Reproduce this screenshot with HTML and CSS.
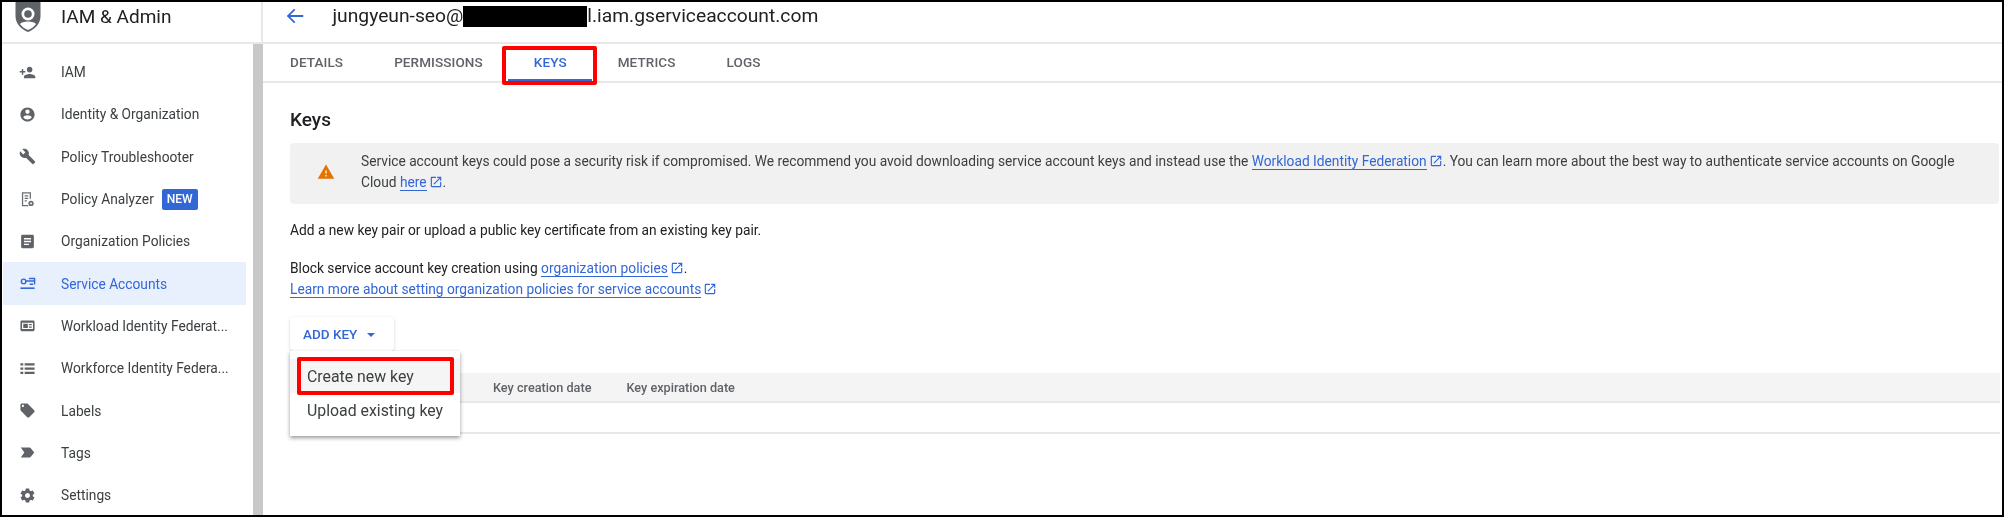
FILE: index.html
```html
<!DOCTYPE html>
<html lang="en">
<head>
<meta charset="utf-8">
<title>IAM &amp; Admin - Keys</title>
<link rel="stylesheet" href="styles.css">
</head>
<body>
<div class="frame">
  <header class="topbar">
    <div class="brand">
      <svg class="logo" viewBox="0 0 26 32"><path fill="#5f6368" d="M13 -2 25.5 2V16C25.500 24 19.500 29.500 13 32 6.500 29.500 .5 24 .5 16V2Z"/><circle cx="13" cy="14" r="6.500" fill="#fff"/><circle cx="13" cy="14" r="3.800" fill="#5f6368"/><path fill="#fff" d="M13 21.500C9 21.500 6 22.500 5 24 7 27 10 29 13 30 16 29 19 27 21 24 20 22.500 17 21.500 13 21.500Z"/></svg>
      <span class="product">IAM &amp; Admin</span>
    </div>
    <div class="account">
      <svg class="back" viewBox="0 0 24 24"><path fill="#3367d6" d="M21 11H6.800l5.600-5.600L11 4l-8 8 8 8 1.400-1.400L6.800 13H21v-2z"/></svg>
      <span class="email">jungyeun-seo@<span class="redact"></span>l.iam.gserviceaccount.com</span>
    </div>
  </header>
  <div class="workspace">
    <aside class="sidebar">
      <nav class="nav">
        <a class="nav-item"><svg class="ico" viewBox="0 0 24 24"><path d="M15 12c2.210 0 4-1.790 4-4s-1.790-4-4-4-4 1.790-4 4 1.790 4 4 4zm-9-2V7H4v3H1v2h3v3h2v-3h3v-2H6zm9 4c-2.670 0-8 1.340-8 4v2h16v-2c0-2.660-5.330-4-8-4z"/></svg><span class="nav-label">IAM</span></a>
        <a class="nav-item"><svg class="ico" viewBox="0 0 24 24"><path d="M12 2C6.480 2 2 6.480 2 12s4.480 10 10 10 10-4.480 10-10S17.520 2 12 2zm0 3c1.660 0 3 1.340 3 3s-1.340 3-3 3-3-1.340-3-3 1.340-3 3-3zm0 14.200c-2.500 0-4.710-1.280-6-3.220.030-1.990 4-3.080 6-3.080 1.990 0 5.970 1.090 6 3.080-1.290 1.940-3.500 3.220-6 3.220z"/></svg><span class="nav-label">Identity &amp; Organization</span></a>
        <a class="nav-item"><svg class="ico" viewBox="0 0 24 24"><path d="M22.700 19l-9.100-9.100c.9-2.300.4-5-1.500-6.900-2-2-5-2.400-7.400-1.300L9 6 6 9 1.600 4.700C.4 7.100.9 10.100 2.900 12.100c1.900 1.900 4.600 2.400 6.900 1.500l9.100 9.100c.4.400 1 .4 1.400 0l2.300-2.300c.5-.4.5-1.100.1-1.400z"/></svg><span class="nav-label">Policy Troubleshooter</span></a>
        <a class="nav-item"><svg class="ico" viewBox="0 0 24 24"><path fill="none" stroke="#6b6f73" stroke-width="1.800" d="M13 20.500H5V2.500h11V11"/><path fill="none" stroke="#6b6f73" stroke-width="1.700" d="M8 7h5M8 10.500h5M8 14h3"/><circle cx="17" cy="17.500" r="3.800" fill="#6b6f73"/><circle cx="17" cy="17.500" r="1.300" fill="#fff"/></svg><span class="nav-label">Policy Analyzer</span><span class="badge">NEW</span></a>
        <a class="nav-item"><svg class="ico" viewBox="0 0 24 24"><path d="M19 2.500H5c-1.100 0-2 .9-2 2v15c0 1.100.9 2 2 2h14c1.100 0 2-.9 2-2v-15c0-1.100-.9-2-2-2zm-5 14.500H7v-2h7v2zm3-4H7v-2h10v2zm0-4H7V7h10v2z"/></svg><span class="nav-label">Organization Policies</span></a>
        <a class="nav-item is-active"><svg class="ico" viewBox="0 0 24 24"><circle cx="6.500" cy="9" r="3.200" fill="none" stroke="#3367d6" stroke-width="2"/><path fill="none" stroke="#3367d6" stroke-width="2" d="M9.500 8.500H21M14 5h8v8.500M15 13h5"/><path fill="#3367d6" d="M2 17.500h20v2.300H2z"/></svg><span class="nav-label">Service Accounts</span></a>
        <a class="nav-item"><svg class="ico" viewBox="0 0 24 24"><path fill-rule="evenodd" d="M4 5h16a2 2 0 0 1 2 2v11a2 2 0 0 1-2 2H4a2 2 0 0 1-2-2V7a2 2 0 0 1 2-2zm.3 3v9h15.400V8zM6 9.500h6.500v6H6zM14 10h4v1.700h-4zm0 3.500h4v1.700h-4z"/></svg><span class="nav-label">Workload Identity Federat...</span></a>
        <a class="nav-item"><svg class="ico" viewBox="0 0 24 24"><path d="M2 4.500h4v3.200H2zM8 4.500h14v3.200H8zM2 10.500h4v3.200H2zM8 10.500h14v3.200H8zM2 16.500h4v3.200H2zM8 16.500h14v3.200H8z"/></svg><span class="nav-label">Workforce Identity Federa...</span></a>
        <a class="nav-item"><svg class="ico" viewBox="0 0 24 24"><path d="M21.410 11.580l-9-9C12.050 2.220 11.550 2 11 2H4c-1.100 0-2 .9-2 2v7c0 .55.22 1.050.59 1.420l9 9c.36.36.86.58 1.410.58.55 0 1.050-.22 1.410-.59l7-7c.37-.36.59-.86.59-1.410 0-.55-.23-1.060-.59-1.420zM5.500 7C4.670 7 4 6.330 4 5.500S4.670 4 5.500 4 7 4.670 7 5.500 6.330 7 5.500 7z"/></svg><span class="nav-label">Labels</span></a>
        <a class="nav-item"><svg class="ico" viewBox="0 0 24 24"><path d="M2.500 19l12.500.01c.67 0 1.270-.33 1.630-.84L21.500 12l-4.870-6.160c-.36-.51-.96-.84-1.630-.84L2.500 5.010 7.500 12z"/></svg><span class="nav-label">Tags</span></a>
        <a class="nav-item"><svg class="ico" viewBox="0 0 24 24"><path d="M19.430 12.980c.04-.32.07-.64.07-.98s-.03-.66-.07-.98l2.110-1.650c.19-.15.24-.42.12-.64l-2-3.460c-.12-.22-.39-.3-.61-.22l-2.490 1c-.52-.4-1.080-.73-1.690-.98l-.38-2.650C14.460 2.180 14.250 2 14 2h-4c-.25 0-.46.18-.49.42l-.38 2.650c-.61.25-1.170.59-1.690.98l-2.490-1c-.23-.09-.49 0-.61.22l-2 3.460c-.13.22-.07.49.12.64l2.110 1.650c-.04.32-.07.65-.07.98s.03.66.07.98l-2.110 1.650c-.19.15-.24.42-.12.64l2 3.460c.12.22.39.3.61.22l2.490-1c.52.4 1.080.73 1.690.98l.38 2.650c.03.24.24.42.49.42h4c.25 0 .46-.18.49-.42l.38-2.650c.61-.25 1.170-.59 1.690-.98l2.490 1c.23.09.49 0 .61-.22l2-3.460c.12-.22.07-.49-.12-.64l-2.110-1.650zM12 15.500c-1.930 0-3.500-1.570-3.500-3.500s1.570-3.500 3.500-3.500 3.500 1.570 3.500 3.500-1.570 3.500-3.500 3.500z"/></svg><span class="nav-label">Settings</span></a>
      </nav>
      <div class="track"></div>
    </aside>
    <main class="main">
      <div class="tabs">
        <a class="tab tab-first">DETAILS</a>
        <a class="tab">PERMISSIONS</a>
        <a class="tab is-active">KEYS</a>
        <a class="tab">METRICS</a>
        <a class="tab">LOGS</a>
      </div>
      <section class="content">
        <h1 class="heading">Keys</h1>
        <div class="alert">
          <svg class="alert-ico" viewBox="0 0 24 24"><path fill="#e37400" d="M1 21h22L12 2 1 21zm12-3h-2v-2h2v2zm0-4h-2v-4h2v4z"/></svg>
          <p class="alert-text">Service account keys could pose a security risk if compromised. We recommend you avoid downloading service account keys and instead use the <a class="link">Workload Identity Federation</a><svg class="ext" viewBox="0 0 24 24"><path d="M19 19H5V5h7V3H5c-1.110 0-2 .9-2 2v14c0 1.100.89 2 2 2h14c1.100 0 2-.9 2-2v-7h-2v7zM14 3v2h3.590l-9.830 9.830 1.410 1.410L19 6.410V10h2V3h-7z"/></svg>. You can learn more about the best way to authenticate service accounts on Google Cloud <a class="link">here</a><svg class="ext" viewBox="0 0 24 24"><path d="M19 19H5V5h7V3H5c-1.110 0-2 .9-2 2v14c0 1.100.89 2 2 2h14c1.100 0 2-.9 2-2v-7h-2v7zM14 3v2h3.590l-9.830 9.830 1.410 1.410L19 6.410V10h2V3h-7z"/></svg>.</p>
        </div>
        <p class="para intro">Add a new key pair or upload a public key certificate from an existing key pair.</p>
        <p class="para policy">Block service account key creation using <a class="link">organization policies</a><svg class="ext" viewBox="0 0 24 24"><path d="M19 19H5V5h7V3H5c-1.110 0-2 .9-2 2v14c0 1.100.89 2 2 2h14c1.100 0 2-.9 2-2v-7h-2v7zM14 3v2h3.590l-9.830 9.830 1.410 1.410L19 6.410V10h2V3h-7z"/></svg>.<br><a class="link">Learn more about setting organization policies for service accounts</a><svg class="ext" viewBox="0 0 24 24"><path d="M19 19H5V5h7V3H5c-1.110 0-2 .9-2 2v14c0 1.100.89 2 2 2h14c1.100 0 2-.9 2-2v-7h-2v7zM14 3v2h3.590l-9.830 9.830 1.410 1.410L19 6.410V10h2V3h-7z"/></svg></p>
        <div class="add-wrap">
          <button class="add-btn">ADD KEY<span class="caret"></span></button>
          <div class="menu">
            <div class="menu-item is-hover">Create new key</div>
            <div class="menu-item">Upload existing key</div>
          </div>
        </div>
        <div class="table">
          <div class="thead">
            <span class="th th-created">Key creation date</span>
            <span class="th">Key expiration date</span>
          </div>
          <div class="tbody"></div>
        </div>
      </section>
    </main>
  </div>
</div>
</body>
</html>
```
FILE: styles.css
```css
*, *::before, *::after { box-sizing: border-box; }
html, body { margin: 0; padding: 0; background: #fff; }
body { font-family: Roboto, "Liberation Sans", sans-serif; color: #202124; }
.frame { width: 2004px; height: 517px; border: 2px solid #000; overflow: hidden; background: #fff; display: flex; flex-direction: column; filter: blur(.35px); }
.topbar { height: 42px; flex: none; display: flex; border-bottom: 2px solid #e8e8e8; }
.brand { width: 261px; flex: none; display: flex; align-items: center; border-right: 2px solid #e8e8e8; overflow: hidden; }
.logo { width: 26px; height: 32px; margin: -12px 0 0 13px; flex: none; }
.product { font-size: 19px; margin: -11px 0 0 20px; color: #202124; }
.account { flex: 1; display: flex; align-items: center; padding-left: 21px; }
.back { width: 22px; height: 22px; margin-top: -12px; flex: none; }
.email { font-size: 19.250px; margin: -13px 0 0 26.500px; color: #202124; white-space: nowrap; }
.redact { display: inline-block; width: 124px; height: 21px; background: #000; vertical-align: -5px; }
.workspace { flex: 1; display: flex; min-height: 0; }
.sidebar { width: 261px; flex: none; display: flex; }
.nav { width: 251px; flex: none; padding: 7px 7px 0 1px; overflow: hidden; }
.track { width: 10px; background: #c8c8c8; }
.nav-item { height: 42.3px; display: flex; align-items: center; padding-left: 16px; color: #3c4043; font-size: 13.75px; }
.nav-item.is-active { background: #e8f0fe; color: #3367d6; }
.is-active .ico { fill: #3367d6; }
.ico { width: 17px; height: 17px; flex: none; fill: #5f6368; margin-right: 25px; }
.nav-label { white-space: nowrap; }
.badge { background: #3367d6; color: #fff; font-size: 12px; font-weight: 500; border-radius: 2px; padding: 0 5px; height: 21px; line-height: 21px; margin-left: 8px; }
.main { flex: 1; min-width: 0; display: flex; flex-direction: column; }
.tabs { height: 39px; flex: none; display: flex; padding-left: 27px; border-bottom: 2px solid #e8e8e8; }
.tab { position: relative; padding: 0 25.5px; height: 37px; line-height: 37px; font-size: 13.500px; font-weight: 500; letter-spacing: .1px; color: #5f6368; }
.tab-first { padding: 0 25.5px 0 0; }
.tab.is-active { color: #3367d6; }
.tab.is-active::before { content: ""; position: absolute; left: 0; right: 0; bottom: 0; height: 2px; background: #3367d6; }
.tab.is-active::after { content: ""; position: absolute; left: -6px; right: -5px; top: 2px; height: 39px; border: 4px solid #f00; border-radius: 2px; }
.content { flex: 1; padding: 0 2px 0 27px; }
.heading { margin: 25px 0 11px; font-size: 19px; line-height: 24px; font-weight: 500; color: #202124; }
.alert { height: 61px; margin-right: 1px; display: flex; background: #f1f1f1; border-radius: 4px; padding: 8px 40px 0 0; }
.alert-ico { width: 18px; height: 18px; flex: none; margin: 12px 26px 0 27px; }
.alert-text { margin: 0; font-size: 13.75px; line-height: 21px; color: #3c4043; }
.link { color: #3367d6; border-bottom: 1px solid #3367d6; }
.ext { width: 14px; height: 14px; fill: #3367d6; vertical-align: -2px; margin-left: 2px; }
.para { margin: 0; font-size: 13.75px; line-height: 21px; color: #202124; }
.intro { margin-top: 16px; }
.policy { margin-top: 17px; }
.add-wrap { position: relative; margin-top: 17px; height: 34px; }
.add-btn { width: 104px; height: 34px; border: 0; background: #fff; border-radius: 4px; box-shadow: 0 1px 3px rgba(60,64,67,.25); font: 500 13.500px Roboto, sans-serif; color: #3367d6; text-align: left; padding: 0 0 0 13px; }
.caret { display: inline-block; width: 0; height: 0; margin-left: 10px; vertical-align: 2px; border: 4px solid transparent; border-top: 4px solid #3367d6; border-bottom: 0; }
.menu { position: absolute; z-index: 3; left: 0; top: 34px; width: 170px; height: 85px; padding-top: 8px; background: #fff; box-shadow: 0 2px 4px rgba(0,0,0,.4); }
.menu-item { height: 34px; line-height: 34px; padding: 1px 0 0 17px; font-size: 15.850px; color: #3c4043; position: relative; }
.menu-item.is-hover { background: #f5f5f5; }
.menu-item.is-hover::after { content: ""; position: absolute; left: 7px; top: -2px; width: 157px; height: 38px; border: 4px solid #f00; border-radius: 2px; }
.table { margin: 22px 0 0; }
.thead { height: 30px; display: flex; align-items: center; background: #f4f4f4; border-bottom: 2px solid #e8e8e8; padding-left: 203px; }
.th { font-size: 12.700px; font-weight: 500; color: #5f6368; }
.th-created { margin-right: 35px; }
.tbody { height: 31px; border-bottom: 2px solid #e8e8e8; }
```
